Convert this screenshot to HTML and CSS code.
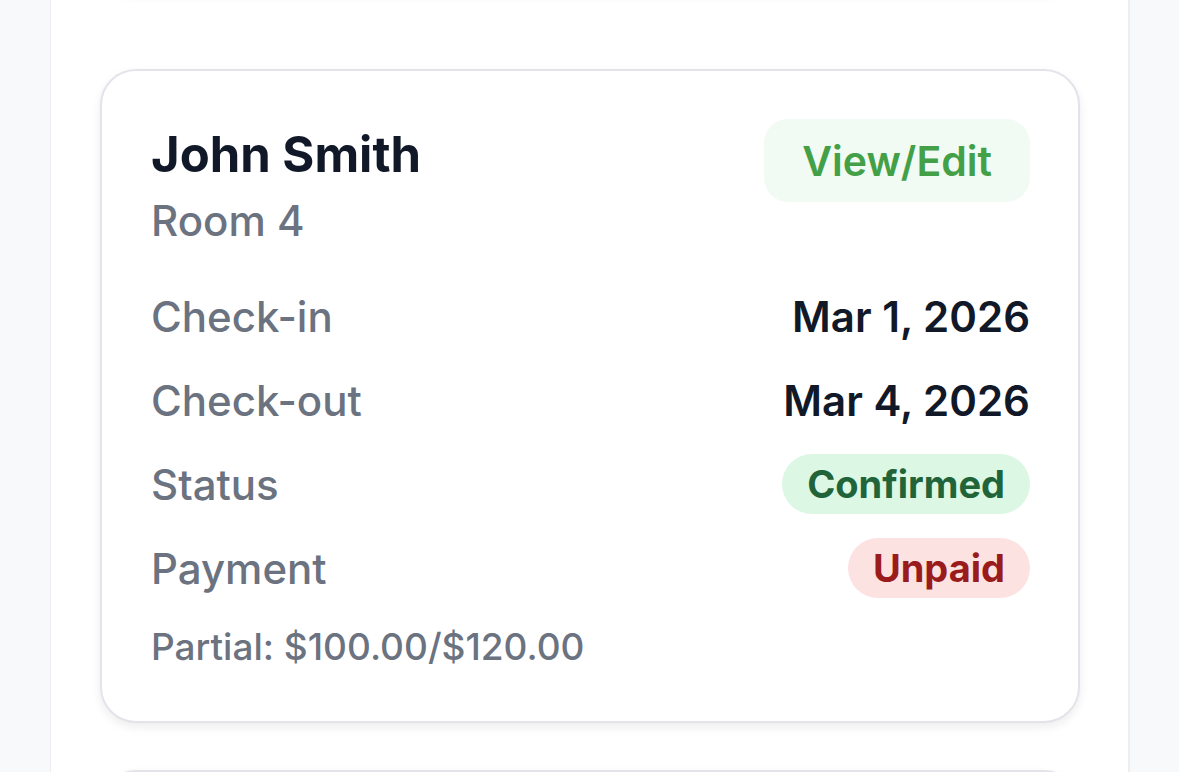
FILE: index.html
```html
<!DOCTYPE html>
<html lang="en">
<head>
<meta charset="utf-8">
<title>Bookings</title>
<link rel="stylesheet" href="styles.css">
</head>
<body>
<div class="panel">
  <div class="card card-stub"></div>
  <div class="card">
    <div class="card-head">
      <div class="guest">
        <div class="guest-name">John Smith</div>
        <div class="guest-room">Room 4</div>
      </div>
      <button class="edit-btn">View/Edit</button>
    </div>
    <div class="row">
      <span class="label">Check-in</span>
      <span class="value">Mar 1, 2026</span>
    </div>
    <div class="row">
      <span class="label">Check-out</span>
      <span class="value">Mar 4, 2026</span>
    </div>
    <div class="row">
      <span class="label">Status</span>
      <span class="pill pill-green">Confirmed</span>
    </div>
    <div class="row">
      <span class="label">Payment</span>
      <span class="pill pill-red">Unpaid</span>
    </div>
    <div class="partial">Partial: $100.00/$120.00</div>
  </div>
  <div class="card card-next"></div>
</div>
</body>
</html>
```
FILE: styles.css
```css
html, body {
  margin: 0;
  padding: 0;
}
body {
  background: #f8f9fb;
  font-family: Inter, "Noto Sans", "Liberation Sans", sans-serif;
  overflow: hidden;
  height: 772px;
}
.panel {
  margin: 0 49px 0 50px;
  background: #ffffff;
  border-left: 1px solid #eceef1;
  border-right: 2px solid #eceef1;
  padding: 0 48px 0 49px;
  display: flex;
  flex-direction: column;
  height: 772px;
  overflow: hidden;
  box-sizing: border-box;
}
.card {
  flex: none;
  background: #ffffff;
  border: 2px solid #e3e4ea;
  border-radius: 36px;
  box-shadow: 0 4px 10px rgba(20, 20, 40, 0.08);
  padding: 48px 48px 47px 49px;
}
.card-stub {
  height: 100px;
  margin-top: -112px;
  padding: 0;
}
.card-stub + .card {
  margin-top: 77px;
}
.card-next {
  margin-top: 47px;
  height: 200px;
  padding: 0;
}
.card-head {
  display: flex;
  justify-content: space-between;
  align-items: flex-start;
  margin-bottom: 38px;
}
.guest-name {
  font-size: 49px;
  line-height: 72px;
  font-weight: 700;
  color: #111827;
}
.guest-room {
  margin-top: 3px;
  font-size: 42px;
  line-height: 54px;
  font-weight: 500;
  color: #6b7280;
}
.edit-btn {
  height: 83px;
  padding: 0 38px;
  border: none;
  border-radius: 24px;
  background: #f1fbf3;
  color: #43a047;
  font-family: inherit;
  font-size: 41px;
  font-weight: 600;
}
.row {
  display: flex;
  justify-content: space-between;
  align-items: center;
  height: 60px;
  margin-bottom: 24px;
}
.label {
  font-size: 42px;
  font-weight: 500;
  color: #6b7280;
}
.value {
  font-size: 42px;
  font-weight: 600;
  color: #111827;
}
.pill {
  display: flex;
  align-items: center;
  height: 60px;
  padding: 0 25px;
  border-radius: 30px;
  font-size: 38px;
  font-weight: 700;
}
.pill-green {
  background: #dcf8e4;
  color: #22643a;
}
.pill-red {
  background: #fde2e2;
  color: #991b1b;
}
.partial {
  margin-top: -2px;
  font-size: 37px;
  line-height: 54px;
  font-weight: 500;
  color: #6b7280;
}
```
